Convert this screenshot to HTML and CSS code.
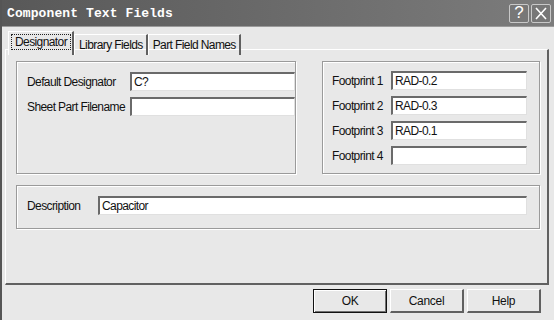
FILE: index.html
```html
<!DOCTYPE html>
<html lang="en">
<head>
    <meta charset="UTF-8">
    <title>Component Text Fields</title>
    <link rel="stylesheet" href="styles.css">
</head>
<body>
<div class="window">
    <div class="titlebar">
        <span class="title">Component Text Fields</span>
        <div class="title-buttons">
            <span class="tbtn">?</span>
            <span class="tbtn">
                <svg width="14" height="13" viewBox="0 0 14 13"><path d="M2 1 L12 12 M12 1 L2 12" stroke="#fff" stroke-width="1.6" fill="none"/></svg>
            </span>
        </div>
    </div>

    <div class="tabs">
        <div class="tab active"><span class="focus">Designator</span></div>
        <div class="tab">Library Fields</div>
        <div class="tab">Part Field Names</div>
    </div>

    <div class="panel">
        <div class="top-groups">
            <div class="group left-group">
                <div class="row">
                    <label>Default Designator</label>
                    <div class="field wide">C?</div>
                </div>
                <div class="row">
                    <label>Sheet Part Filename</label>
                    <div class="field wide"></div>
                </div>
            </div>
            <div class="group right-group">
                <div class="row fp"><label>Footprint 1</label><div class="field">RAD-0.2</div></div>
                <div class="row fp"><label>Footprint 2</label><div class="field">RAD-0.3</div></div>
                <div class="row fp"><label>Footprint 3</label><div class="field">RAD-0.1</div></div>
                <div class="row fp"><label>Footprint 4</label><div class="field"></div></div>
            </div>
        </div>
        <div class="group desc-group">
            <div class="row">
                <label>Description</label>
                <div class="field desc">Capacitor</div>
            </div>
        </div>
    </div>

    <div class="actions">
        <button class="default">OK</button>
        <button>Cancel</button>
        <button>Help</button>
    </div>
</div>
</body>
</html>
```

FILE: styles.css
```css
body { margin: 0; font-family: "Liberation Sans", Arial, sans-serif; font-size: 12px; letter-spacing: -0.6px; color: #111; }
.window { width: 554px; height: 320px; background: #e8e8e8; border-left: 2px solid #555; box-sizing: border-box; overflow: hidden; }

.titlebar { height: 26px; background: linear-gradient(to right, #585858, #6e6e6e 60%, #7c7c7c); display: flex; align-items: center; justify-content: space-between; padding: 0 3px 0 5px; border-bottom: 1px solid #9a9a9a; }
.title { font-family: "Liberation Mono", "Courier New", monospace; font-weight: bold; font-size: 13px; color: #fff; letter-spacing: 0.1px; }
.title-buttons { display: flex; gap: 2px; }
.tbtn { width: 20px; height: 19px; box-sizing: border-box; border: 1px solid #c8c8c8; border-radius: 2px; background: #777; color: #fff; font-size: 17px; letter-spacing: 0; display: flex; align-items: center; justify-content: center; }

.tabs { display: flex; padding: 4px 0 0 6px; height: 23px; box-sizing: border-box; }
.tab { border: 1px solid #fff; border-bottom: none; border-right: 2px solid #606060; padding: 3px 3px 0 4px; margin-top: 3px; height: 17px; white-space: nowrap; }
.tab.active { margin-top: 0; height: 20px; padding: 3px 1px 0 2px; background: #e8e8e8; position: relative; z-index: 1; }
.focus { border: 1px dotted #222; padding: 0 3px; }

.panel { margin: -1px 5px 0 3px; height: 236px; box-sizing: border-box; border: 1px solid #fff; border-right: 2px solid #606060; border-bottom: 2px solid #606060; padding: 11px 6px 0 10px; }
.top-groups { display: flex; gap: 26px; }
.group { border: 1px solid #9a9a9a; box-shadow: inset 1px 1px 0 #fff, 1px 1px 0 #fff; box-sizing: border-box; }
.left-group { width: 280px; height: 113px; padding: 10px 0 0 10px; }
.right-group { width: 218px; height: 113px; padding: 9px 0 0 9px; }
.desc-group { width: 524px; height: 44px; margin-top: 11px; padding: 10px 0 0 10px; }

.row { display: flex; align-items: center; height: 19px; margin-bottom: 6px; }
.row label { width: 103px; flex-shrink: 0; white-space: nowrap; }
.row.fp label { width: 59px; }
.desc-group .row label { width: 71px; }

.field { height: 19px; box-sizing: border-box; background: #fff; border-top: 2px solid #6a6a6a; border-left: 2px solid #6a6a6a; border-right: 1px solid #e0e0e0; border-bottom: 1px solid #e0e0e0; padding: 1px 0 0 2px; width: 136px; line-height: 15px; letter-spacing: -0.6px; }
.field.wide { width: 174px; }
.field.desc { width: 429px; }

.actions { display: flex; justify-content: flex-end; gap: 3px; padding: 4px 13px 0 0; }
button { width: 74px; height: 24px; font-family: "Liberation Sans", Arial, sans-serif; font-size: 12px; letter-spacing: -0.3px; background: #e8e8e8; border: 1px solid #fff; border-right: 2px solid #606060; border-bottom: 2px solid #606060; color: #111; }
button.default { border: 1px solid #111; box-shadow: inset 1px 1px 0 #fff, inset -1px -1px 0 #707070; }
```
